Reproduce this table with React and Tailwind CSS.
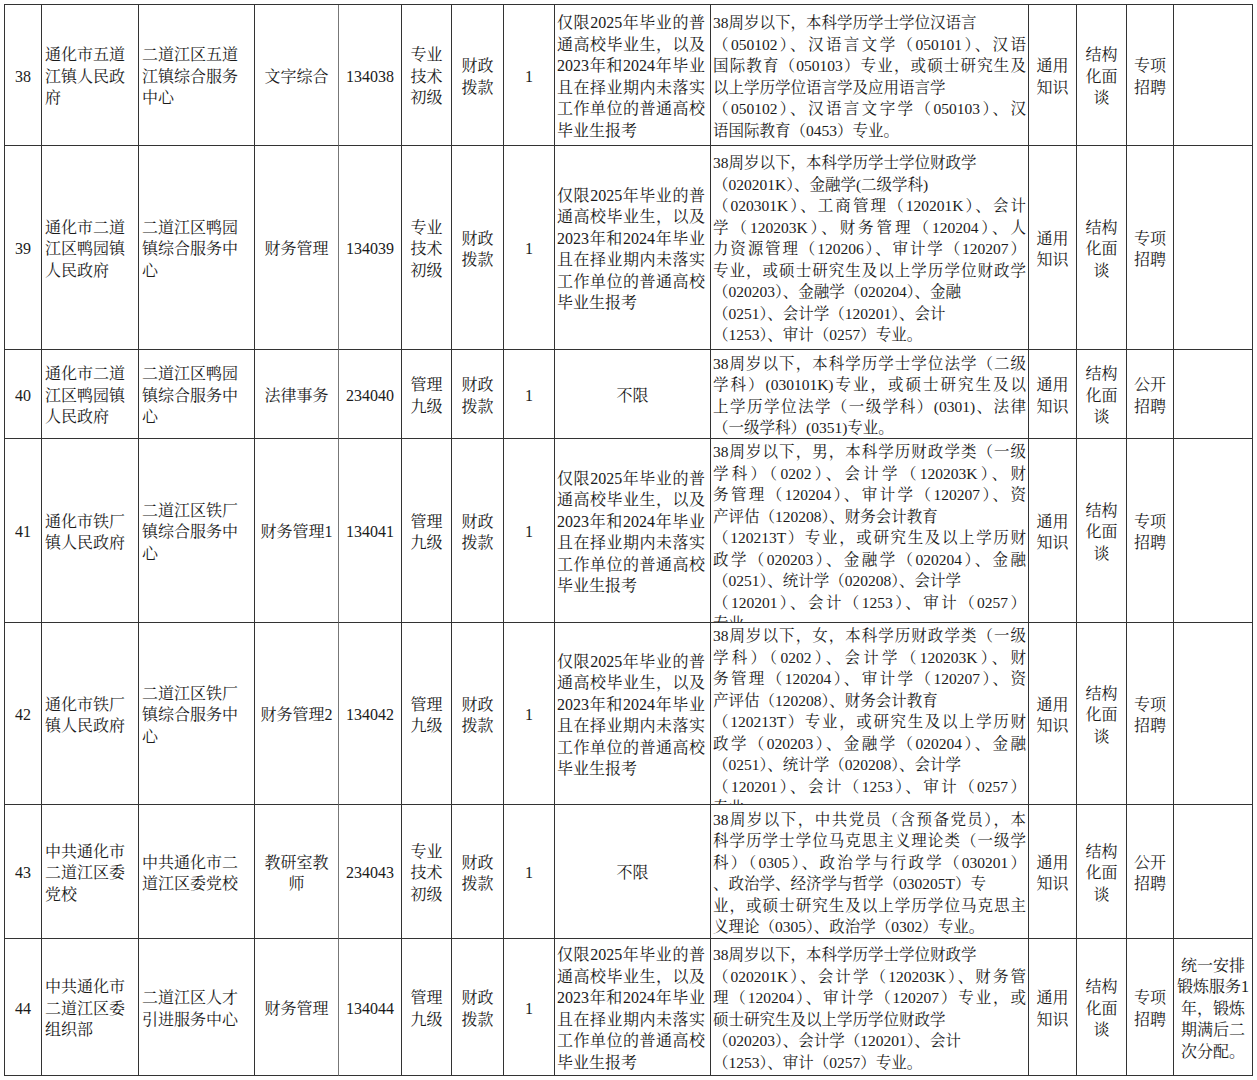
import React from "react";

// 一行一个字符串；以 "|" 开头的行两端对齐（参照原表中排满的行）
const LIMITED = [
  "|仅限2025年毕业的普",
  "|通高校毕业生，以及",
  "|2023年和2024年毕业",
  "|且在择业期内未落实",
  "|工作单位的普通高校",
  "毕业生报考",
];

const reqFinance = (gender) => [
  `|38周岁以下，${gender}，本科学历财政学类（一级`,
  "|学科）（0202）、会计学（120203K）、财",
  "|务管理（120204）、审计学（120207）、资",
  "产评估（120208）、财务会计教育",
  "|（120213T）专业，或研究生及以上学历财",
  "|政学（020203）、金融学（020204）、金融",
  "（0251）、统计学（020208）、会计学",
  "|（120201）、会计（1253）、审计（0257）",
  "专业。",
];

const rows = [
  {
    n: "38",
    dept: ["通化市五道", "江镇人民政", "府"],
    unit: ["二道江区五道", "江镇综合服务", "中心"],
    post: ["文字综合"],
    code: "134038",
    level: ["专业", "技术", "初级"],
    scope: LIMITED,
    req: [
      "38周岁以下，本科学历学士学位汉语言",
      "|（050102）、汉语言文学（050101）、汉语",
      "|国际教育（050103）专业，或硕士研究生及",
      "以上学历学位语言学及应用语言学",
      "|（050102）、汉语言文字学（050103）、汉",
      "语国际教育（0453）专业。",
    ],
    type: ["专项", "招聘"],
    note: [],
  },
  {
    n: "39",
    dept: ["通化市二道", "江区鸭园镇", "人民政府"],
    unit: ["二道江区鸭园", "镇综合服务中", "心"],
    post: ["财务管理"],
    code: "134039",
    level: ["专业", "技术", "初级"],
    scope: LIMITED,
    req: [
      "38周岁以下，本科学历学士学位财政学",
      "（020201K）、金融学(二级学科)",
      "|（020301K）、工商管理（120201K）、会计",
      "|学（120203K）、财务管理（120204）、人",
      "|力资源管理（120206）、审计学（120207）",
      "|专业，或硕士研究生及以上学历学位财政学",
      "（020203）、金融学（020204）、金融",
      "（0251）、会计学（120201）、会计",
      "（1253）、审计（0257）专业。",
    ],
    type: ["专项", "招聘"],
    note: [],
  },
  {
    n: "40",
    dept: ["通化市二道", "江区鸭园镇", "人民政府"],
    unit: ["二道江区鸭园", "镇综合服务中", "心"],
    post: ["法律事务"],
    code: "234040",
    level: ["管理", "九级"],
    scope: null,
    req: [
      "|38周岁以下，本科学历学士学位法学（二级",
      "|学科）(030101K)专业，或硕士研究生及以",
      "|上学历学位法学（一级学科）(0301)、法律",
      "（一级学科）(0351)专业。",
    ],
    type: ["公开", "招聘"],
    note: [],
  },
  {
    n: "41",
    dept: ["通化市铁厂", "镇人民政府"],
    unit: ["二道江区铁厂", "镇综合服务中", "心"],
    post: ["财务管理1"],
    code: "134041",
    level: ["管理", "九级"],
    scope: LIMITED,
    req: reqFinance("男"),
    reqTop: true,
    type: ["专项", "招聘"],
    note: [],
  },
  {
    n: "42",
    dept: ["通化市铁厂", "镇人民政府"],
    unit: ["二道江区铁厂", "镇综合服务中", "心"],
    post: ["财务管理2"],
    code: "134042",
    level: ["管理", "九级"],
    scope: LIMITED,
    req: reqFinance("女"),
    reqTop: true,
    type: ["专项", "招聘"],
    note: [],
  },
  {
    n: "43",
    dept: ["中共通化市", "二道江区委", "党校"],
    unit: ["中共通化市二", "道江区委党校"],
    post: ["教研室教", "师"],
    code: "234043",
    level: ["专业", "技术", "初级"],
    scope: null,
    req: [
      "|38周岁以下，中共党员（含预备党员），本",
      "|科学历学士学位马克思主义理论类（一级学",
      "|科）（0305）、政治学与行政学（030201）",
      "、政治学、经济学与哲学（030205T）专",
      "|业，或硕士研究生及以上学历学位马克思主",
      "义理论（0305）、政治学（0302）专业。",
    ],
    type: ["公开", "招聘"],
    note: [],
  },
  {
    n: "44",
    dept: ["中共通化市", "二道江区委", "组织部"],
    unit: ["二道江区人才", "引进服务中心"],
    post: ["财务管理"],
    code: "134044",
    level: ["管理", "九级"],
    scope: LIMITED,
    req: [
      "38周岁以下，本科学历学士学位财政学",
      "|（020201K）、会计学（120203K）、财务管",
      "|理（120204）、审计学（120207）专业，或",
      "硕士研究生及以上学历学位财政学",
      "（020203）、会计学（120201）、会计",
      "（1253）、审计（0257）专业。",
    ],
    type: ["专项", "招聘"],
    note: ["统一安排", "锻炼服务1", "年，锻炼", "期满后二", "次分配。"],
  },
];

function Cell({ lines, align = "center", top = false, className = "" }) {
  return (
    <div
      className={`flex flex-col overflow-hidden border-r border-b border-[#333] ${
        top ? "justify-start pt-[2px]" : "justify-center pt-[3px]"
      } ${align === "left" ? "text-left" : "text-center"} ${className}`}
    >
      {lines.map((line, i) => {
        const justify = line.startsWith("|");
        return (
          <div
            key={i}
            className={`leading-[21.5px] ${
              justify ? "text-justify [text-align-last:justify]" : ""
            }`}
          >
            {justify ? line.slice(1) : line}
          </div>
        );
      })}
    </div>
  );
}

export default function App() {
  return (
    <div className="min-h-screen bg-white pl-[4px] pt-[4px] font-['Liberation_Serif','Noto_Serif_CJK_SC','Noto_Sans_CJK_SC',serif] text-[16px] text-[#1a1a1a]">
      <div className="grid w-fit grid-cols-[37px_97px_116px_84px_63px_50px_52px_51px_156px_318px_48px_50px_47px_79px] grid-rows-[141px_204px_89px_184px_182px_134px_137px] border-t border-l border-[#333]">
        {rows.map((row) => (
          <React.Fragment key={row.n}>
            <Cell lines={[row.n]} />
            <Cell lines={row.dept} align="left" className="pl-[3px]" />
            <Cell lines={row.unit} align="left" className="pl-[3px]" />
            <Cell lines={row.post} className="border-r-[#777]" />
            <Cell lines={[row.code]} />
            <Cell lines={row.level} />
            <Cell lines={["财政", "拨款"]} />
            <Cell lines={["1"]} />
            {row.scope ? (
              <Cell lines={row.scope} align="left" className="pl-[2px] pr-[5px]" />
            ) : (
              <Cell lines={["不限"]} />
            )}
            <Cell
              lines={row.req}
              align="left"
              top={row.reqTop}
              className="pl-[2px] pr-[2px] text-[15.5px]"
            />
            <Cell lines={["通用", "知识"]} />
            <Cell lines={["结构", "化面", "谈"]} />
            <Cell lines={row.type} />
            <Cell lines={row.note} />
          </React.Fragment>
        ))}
      </div>
    </div>
  );
}
